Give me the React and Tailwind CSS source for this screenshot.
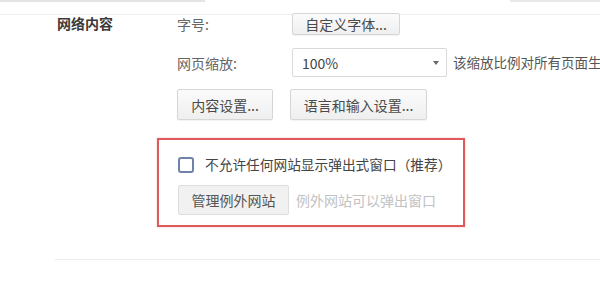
import React from "react";

const font = { fontFamily: '"Noto Sans CJK SC", "Noto Sans", sans-serif' };

function Btn({ children, className = "" }) {
  return (
    <div
      className={
        "flex shrink-0 items-center justify-center rounded-[2px] border border-[#d6d6d6] bg-gradient-to-b from-[#fbfbfb] to-[#efefef] text-[14px] leading-none text-[#4a4a4a] shadow-[0_1px_1px_rgba(0,0,0,0.05)] " +
        className
      }
    >
      {children}
    </div>
  );
}

export default function App() {
  return (
    <div
      className="relative flex h-[300px] w-[600px] flex-col overflow-hidden bg-white"
      style={font}
    >
      {/* faint remnants at the very top */}
      <div className="flex h-[2px] justify-between">
        <div className="h-[2px] w-[205px] bg-[#e4e4e4]" />
        <div className="h-[2px] w-[90px] bg-[#e8e8e8]" />
      </div>
      <div className="mt-[12px] h-px w-full bg-[#f0f0f0]" />

      <div className="-mt-[2px] flex">
        {/* section label */}
        <div className="w-[177px] shrink-0 pl-[57px] pt-[1px]">
          <div className="text-[14px] font-bold leading-[18px] text-[#3a3a3a]">网络内容</div>
        </div>

        {/* right column */}
        <div className="flex min-w-0 flex-col">
          {/* row 1 */}
          <div className="flex h-[22px] items-center">
            <div className="w-[115px] shrink-0 text-[14px] leading-none text-[#666]">字号:</div>
            <Btn className="h-[22px] w-[108px]">自定义字体...</Btn>
          </div>

          {/* row 2 */}
          <div className="mt-[13px] flex h-[29px] items-center">
            <div className="w-[115px] shrink-0 text-[14px] leading-none text-[#666]">网页缩放:</div>
            <div className="flex h-[29px] w-[155px] shrink-0 items-center justify-between rounded-[2px] border border-[#dadada] bg-white pl-[9px] pr-[7px]">
              <span className="text-[14px] leading-none text-[#444]">100%</span>
              <span className="h-0 w-0 border-x-[3.5px] border-t-[4px] border-x-transparent border-t-[#666]" />
            </div>
            <div className="ml-[6px] whitespace-nowrap text-[13.5px] leading-none text-[#555]">
              该缩放比例对所有页面生效
            </div>
          </div>

          {/* row 3 */}
          <div className="mt-[12px] flex h-[31px] items-center gap-[17px]">
            <Btn className="h-[31px] w-[96px]">内容设置...</Btn>
            <Btn className="h-[31px] w-[137px]">语言和输入设置...</Btn>
          </div>

          {/* highlighted box */}
          <div className="-ml-[20px] mt-[18px] flex h-[89px] w-[308px] shrink-0 flex-col border-2 border-[#de5a5a] pl-[19px] shadow-[0_0_2px_rgba(222,90,90,0.35)]">
            <div className="mt-[17px] flex h-[16px] items-center">
              <div className="h-[16px] w-[16px] shrink-0 rounded-[3px] border-2 border-[#6f82ab] bg-white" />
              <div className="ml-[11px] whitespace-nowrap text-[13.7px] leading-none text-[#444]">
                不允许任何网站显示弹出式窗口（推荐）
              </div>
            </div>
            <div className="mt-[12px] flex h-[30px] items-center">
              <div className="flex h-[30px] w-[111px] shrink-0 items-center justify-center rounded-[2px] border border-[#dedede] bg-[#f1f1f1] text-[14px] leading-none text-[#555]">
                管理例外网站
              </div>
              <div className="ml-[7px] whitespace-nowrap text-[14px] leading-none text-[#c2c2c2]">
                例外网站可以弹出窗口
              </div>
            </div>
          </div>
        </div>
      </div>

      <div className="ml-[55px] mt-[32px] h-px bg-[#ececec]" />
    </div>
  );
}
